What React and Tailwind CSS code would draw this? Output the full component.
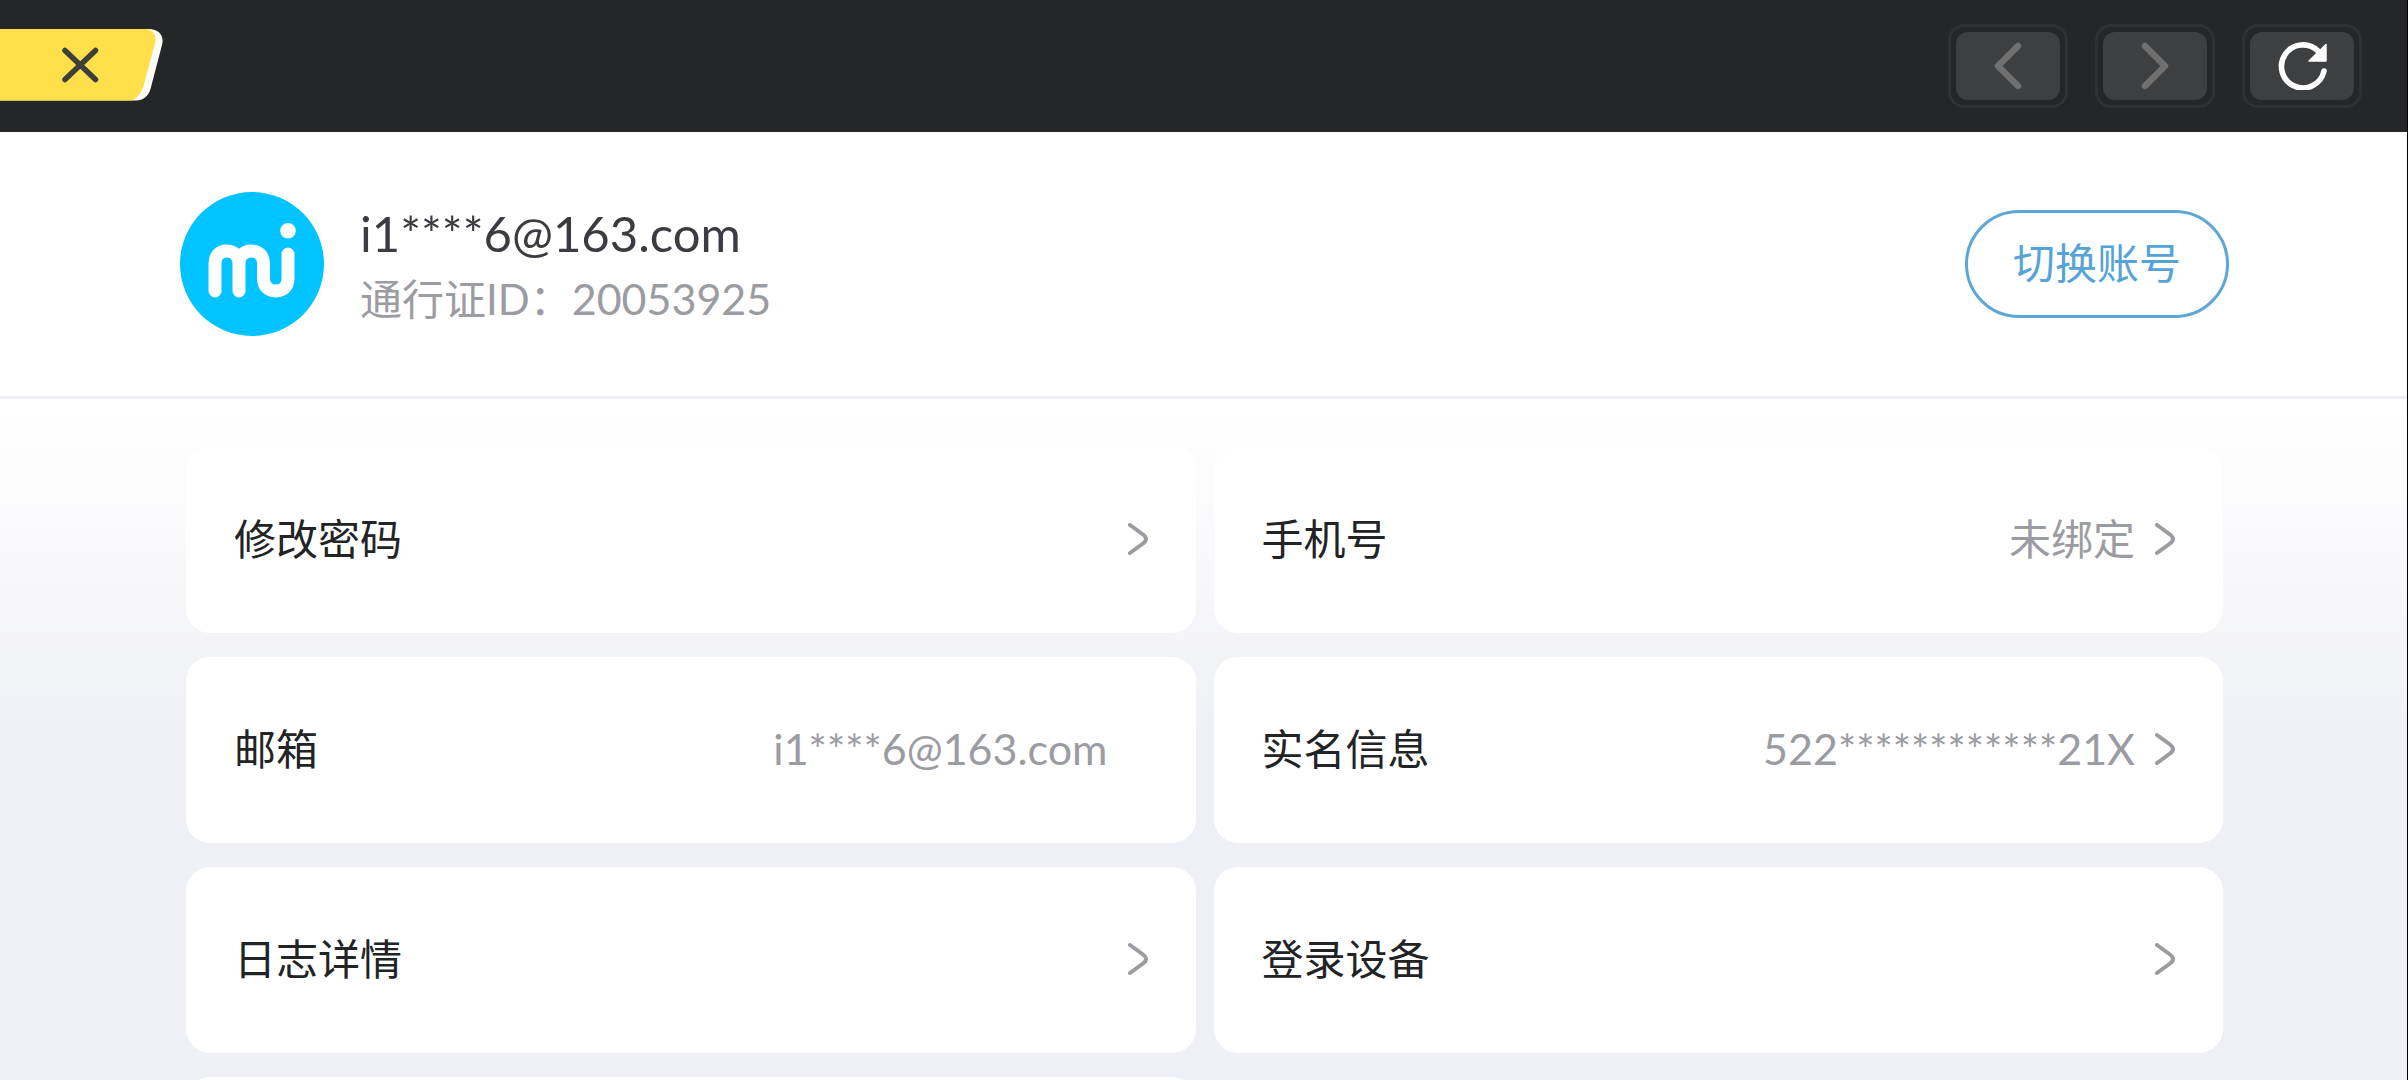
import React from "react";

const rows = [
    { label: "修改密码", value: "", arrow: true },
    { label: "手机号", value: "未绑定", arrow: true },
    { label: "邮箱", value: "i1****6@163.com", latin: true, arrow: false },
    { label: "实名信息", value: "522************21X", latin: true, arrow: true },
    { label: "日志详情", value: "", arrow: true },
    { label: "登录设备", value: "", arrow: true },
];

const CloseTab = () => {
    return (
        <button type="button" aria-label="关闭" className="block cursor-pointer">
            <svg width="164" height="74" viewBox="0 0 164 74" fill="none">
                <path
                    d="M0 0H149C159 0 164.500 7 162 16L150.500 60C148.500 67 143 71.500 136 71.500H0Z"
                    fill="#fffef8"
                />
                <path
                    d="M0 0H145C152 0 157 6 155.300 13L143.500 57C141 65 136 71.500 129 71.500H0Z"
                    fill="#ffe04b"
                />
                <path
                    d="M65 21.500L95.500 50.500M95.500 21.500L65 50.500"
                    stroke="#3d3f39"
                    strokeWidth="5.500"
                    strokeLinecap="round"
                />
            </svg>
        </button>
    );
};

const NavButton = ({ label, children }) => {
    return (
        <button
            type="button"
            aria-label={label}
            className="w-[120px] h-[84px] p-[5px] rounded-2xl border-[3px] border-[#2e3032] cursor-pointer"
        >
            <span className="flex w-full h-full items-center justify-center rounded-xl bg-[#3e3f41]">
                {children}
            </span>
        </button>
    );
};

const BackIcon = () => (
    <svg width="28" height="48" viewBox="0 0 28 48" fill="none">
        <path
            d="M24 4L4 24L24 44"
            stroke="#707071"
            strokeWidth="6.500"
            strokeLinecap="round"
            strokeLinejoin="round"
        />
    </svg>
);

const ForwardIcon = () => (
    <svg width="28" height="48" viewBox="0 0 28 48" fill="none">
        <path
            d="M4 4L24 24L4 44"
            stroke="#707071"
            strokeWidth="6.500"
            strokeLinecap="round"
            strokeLinejoin="round"
        />
    </svg>
);

const ReloadIcon = () => (
    <svg width="50" height="48" viewBox="0 0 50 48" fill="none">
        <path
            d="M47 29A21.500 21.500 0 1 1 41 9"
            stroke="#fff"
            strokeWidth="5.600"
            strokeLinecap="round"
        />
        <path
            d="M49 2.500V19H32Z"
            fill="#fff"
            stroke="#fff"
            strokeWidth="1.500"
            strokeLinejoin="round"
        />
    </svg>
);

const MiLogo = () => (
    <svg
        width="144"
        height="144"
        viewBox="0 0 144 144"
        fill="none"
        role="img"
        aria-label="头像"
        className="shrink-0"
    >
        <circle cx="72" cy="72" r="72" fill="#00c3ff" />
        <path
            d="M35 99V71.500C35 64 39 59 46.500 59S59 64 59 71.500V99M59 71.500C59 64 64 59 71.500 59S83.500 64 83.500 71.500V86.500C83.500 94 88 99 95.800 99S108 94 108 86.500V62"
            stroke="#fff"
            strokeWidth="13"
            strokeLinecap="round"
            strokeLinejoin="round"
        />
        <circle cx="108" cy="38.700" r="7.800" fill="#fff" />
    </svg>
);

const ArrowIcon = () => (
    <svg width="20" height="32" viewBox="0 0 20 32" fill="none">
        <path
            d="M2 2L15 11.500Q21 16 15 20.500L2 30"
            stroke="#9b9ca1"
            strokeWidth="4"
            strokeLinecap="round"
        />
    </svg>
);

const Row = ({ label, value, latin, arrow }) => {
    const Tag = arrow ? "button" : "div";
    return (
        <Tag
            type={arrow ? "button" : undefined}
            className="flex items-center justify-between h-[186px] px-12 pb-[2px] rounded-3xl bg-white text-left"
        >
            <span className="text-[42px] leading-[60px] text-[#222325]">{label}</span>
            <span className="flex items-center">
                {value && (
                    <span
                        className={`leading-[60px] text-[#9b9ca1] ${latin ? "text-[43px]" : "text-[42px]"}`}
                    >
                        {value}
                    </span>
                )}
                <span className="flex w-10 justify-end">{arrow && <ArrowIcon />}</span>
            </span>
        </Tag>
    );
};

const App = () => {
    return (
        <div className="flex flex-col h-screen overflow-hidden border-r border-black bg-white font-['Lato','Noto_Sans_CJK_SC',sans-serif]">
            <header className="flex shrink-0 items-center justify-between h-[132px] pr-[45px] bg-[#242628]">
                <CloseTab />
                <nav className="flex gap-[27px]">
                    <NavButton label="后退">
                        <BackIcon />
                    </NavButton>
                    <NavButton label="前进">
                        <ForwardIcon />
                    </NavButton>
                    <NavButton label="刷新">
                        <ReloadIcon />
                    </NavButton>
                </nav>
            </header>

            <section className="flex shrink-0 items-center justify-between h-[267px] pl-[180px] pr-[178px] border-b-[3px] border-[#eff0f5]">
                <div className="flex items-center gap-9">
                    <MiLogo />
                    <div className="pb-[2px]">
                        <p className="text-[49px] leading-[72px] text-[#3a3c42]">i1****6@163.com</p>
                        <p className="text-[42px] leading-[60px] text-[#9b9ca1]">
                            通行证ID：<span className="text-[43px]">20053925</span>
                        </p>
                    </div>
                </div>
                <button
                    type="button"
                    className="w-[264px] h-[108px] pb-[2px] rounded-full border-[3px] border-[#5ea6d6] text-[42px] leading-[60px] text-[#56a3d8] cursor-pointer"
                >
                    切换账号
                </button>
            </section>

            <main className="grow overflow-y-auto [scrollbar-width:none] pt-12 pl-[186px] pr-[184px] bg-linear-to-b from-white from-2% to-[#eff0f5] to-50%">
                <div className="grid grid-cols-2 gap-x-[18px] gap-y-6">
                    {rows.map((row) => (
                        <Row key={row.label} {...row} />
                    ))}
                    <div className="h-[186px] rounded-3xl bg-white" />
                </div>
            </main>
        </div>
    );
};

export default App;
